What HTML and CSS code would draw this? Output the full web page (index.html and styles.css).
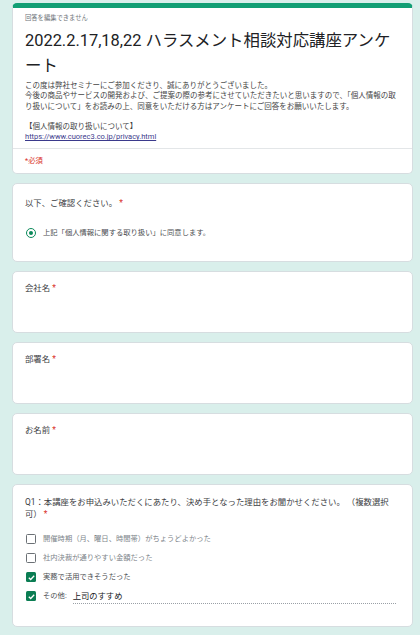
FILE: index.html
```html
<!DOCTYPE html>
<html lang="ja">
<head>
<meta charset="utf-8">
<title>2022.2.17,18,22 ハラスメント相談対応講座アンケート</title>
<link rel="stylesheet" href="styles.css">
</head>
<body>
<div class="page">
  <section class="card header">
    <div class="head-body">
      <div class="note">回答を編集できません</div>
      <h1 class="title">2022.2.17,18,22 ハラスメント相談対応講座アンケ<br>ート</h1>
      <div class="desc">この度は弊社セミナーにご参加くださり、誠にありがとうございました。<br>今後の商品やサービスの開発および、ご提案の際の参考にさせていただきたいと思いますので、「個人情報の取<br>り扱いについて」をお読みの上、同意をいただける方はアンケートにご回答をお願いいたします。<br><br>【個人情報の取り扱いについて】<br><a class="link" href="#">https://www.cuorec3.co.jp/privacy.html</a></div>
    </div>
    <div class="req">*必須</div>
  </section>

  <section class="card q-radio">
    <div class="q-title">以下、ご確認ください。 <span class="star">*</span></div>
    <div class="radio-row">
      <span class="radio"><span class="dot"></span></span>
      <span class="opt">上記「個人情報に関する取り扱い」に同意します。</span>
    </div>
  </section>

  <section class="card q-text">
    <div class="q-title">会社名 <span class="star">*</span></div>
  </section>

  <section class="card q-text">
    <div class="q-title">部署名 <span class="star">*</span></div>
  </section>

  <section class="card q-text">
    <div class="q-title">お名前 <span class="star">*</span></div>
  </section>

  <section class="card q-check">
    <div class="q-title q-multi">Q1：本講座をお申込みいただくにあたり、決め手となった理由をお聞かせください。 （複数選択<br>可） <span class="star">*</span></div>
    <ul class="checks">
      <li class="check-row"><span class="box"></span><span class="opt dim">開催時期（月、曜日、時間帯）がちょうどよかった</span></li>
      <li class="check-row"><span class="box"></span><span class="opt dim">社内決裁が通りやすい金額だった</span></li>
      <li class="check-row"><span class="box on"><svg viewBox="0 0 10 10" width="9" height="9"><path d="M2 5.2 L4.1 7.2 L8 3" fill="none" stroke="#fff" stroke-width="1.4"/></svg></span><span class="opt">実務で活用できそうだった</span></li>
      <li class="check-row"><span class="box on"><svg viewBox="0 0 10 10" width="9" height="9"><path d="M2 5.2 L4.1 7.2 L8 3" fill="none" stroke="#fff" stroke-width="1.4"/></svg></span><span class="opt">その他:</span><span class="other">上司のすすめ</span></li>
    </ul>
  </section>
</div>
</body>
</html>
```

FILE: styles.css
```css
html, body {
  margin: 0;
  padding: 0;
}
body {
  background: #d9efeb;
  font-family: Roboto, "Noto Sans CJK JP", sans-serif;
  color: #202124;
}
.page {
  display: flex;
  flex-direction: column;
  gap: 9px;
  padding: 3px 7px 20px 12px;
}
.card {
  background: #fff;
  border: 1px solid #d6dde0;
  border-radius: 5px;
  padding: 0 12px;
}
.header {
  border-top: 5px solid #119f74;
  padding: 0;
}
.head-body {
  padding: 6px 12px 5px;
  border-bottom: 1px solid #e3e6e8;
}
.note {
  font-size: 6.3px;
  line-height: 8px;
  color: #70757a;
}
.title {
  margin: 5.5px 0 0;
  font-size: 16.4px;
  line-height: 25px;
  font-weight: 400;
  color: #202124;
}
.desc {
  margin-top: 3.5px;
  font-size: 7.5px;
  line-height: 10.3px;
  color: #444;
  white-space: nowrap;
}
.link {
  color: #3b3a8c;
  text-decoration: underline;
}
.req {
  padding: 7px 12px;
  font-size: 7.3px;
  line-height: 10px;
  color: #d93025;
}
.q-title {
  font-size: 8.4px;
  line-height: 10px;
  color: #3c4043;
  white-space: nowrap;
}
.star {
  color: #d93025;
}
.q-radio {
  padding-top: 14px;
  padding-bottom: 22px;
}
.radio-row {
  margin-top: 19px;
  height: 12px;
  display: flex;
  align-items: center;
  gap: 7px;
  padding-left: 1px;
}
.radio {
  width: 10px;
  height: 10px;
  box-sizing: border-box;
  border: 1.5px solid #0b8a5a;
  border-radius: 50%;
  display: flex;
  align-items: center;
  justify-content: center;
}
.dot {
  width: 4.5px;
  height: 4.5px;
  border-radius: 50%;
  background: #0b8a5a;
}
.opt {
  font-size: 7.3px;
  line-height: 10px;
  color: #4a4d50;
  white-space: nowrap;
}
.opt.dim {
  color: #80868b;
}
.q-text {
  padding-top: 11px;
  padding-bottom: 39px;
}
.q-check {
  padding-top: 11px;
  padding-bottom: 20px;
}
.q-multi {
  line-height: 12px;
}
.checks {
  list-style: none;
  margin: 10px 0 0;
  padding: 0;
}
.check-row {
  height: 19px;
  display: flex;
  align-items: center;
  gap: 7px;
  padding-left: 1px;
}
.box {
  width: 10px;
  height: 10px;
  box-sizing: border-box;
  border: 1.4px solid #6b7075;
  border-radius: 1.5px;
  display: flex;
  align-items: center;
  justify-content: center;
  flex: none;
}
.box.on {
  border: none;
  background: #0b7d53;
}
.other {
  flex: 1;
  margin-left: -1px;
  margin-right: 4px;
  font-size: 8.3px;
  line-height: 12px;
  color: #202124;
  border-bottom: 1px dotted #9aa0a6;
  padding-bottom: 1px;
  margin-top: 2px;
}
```
